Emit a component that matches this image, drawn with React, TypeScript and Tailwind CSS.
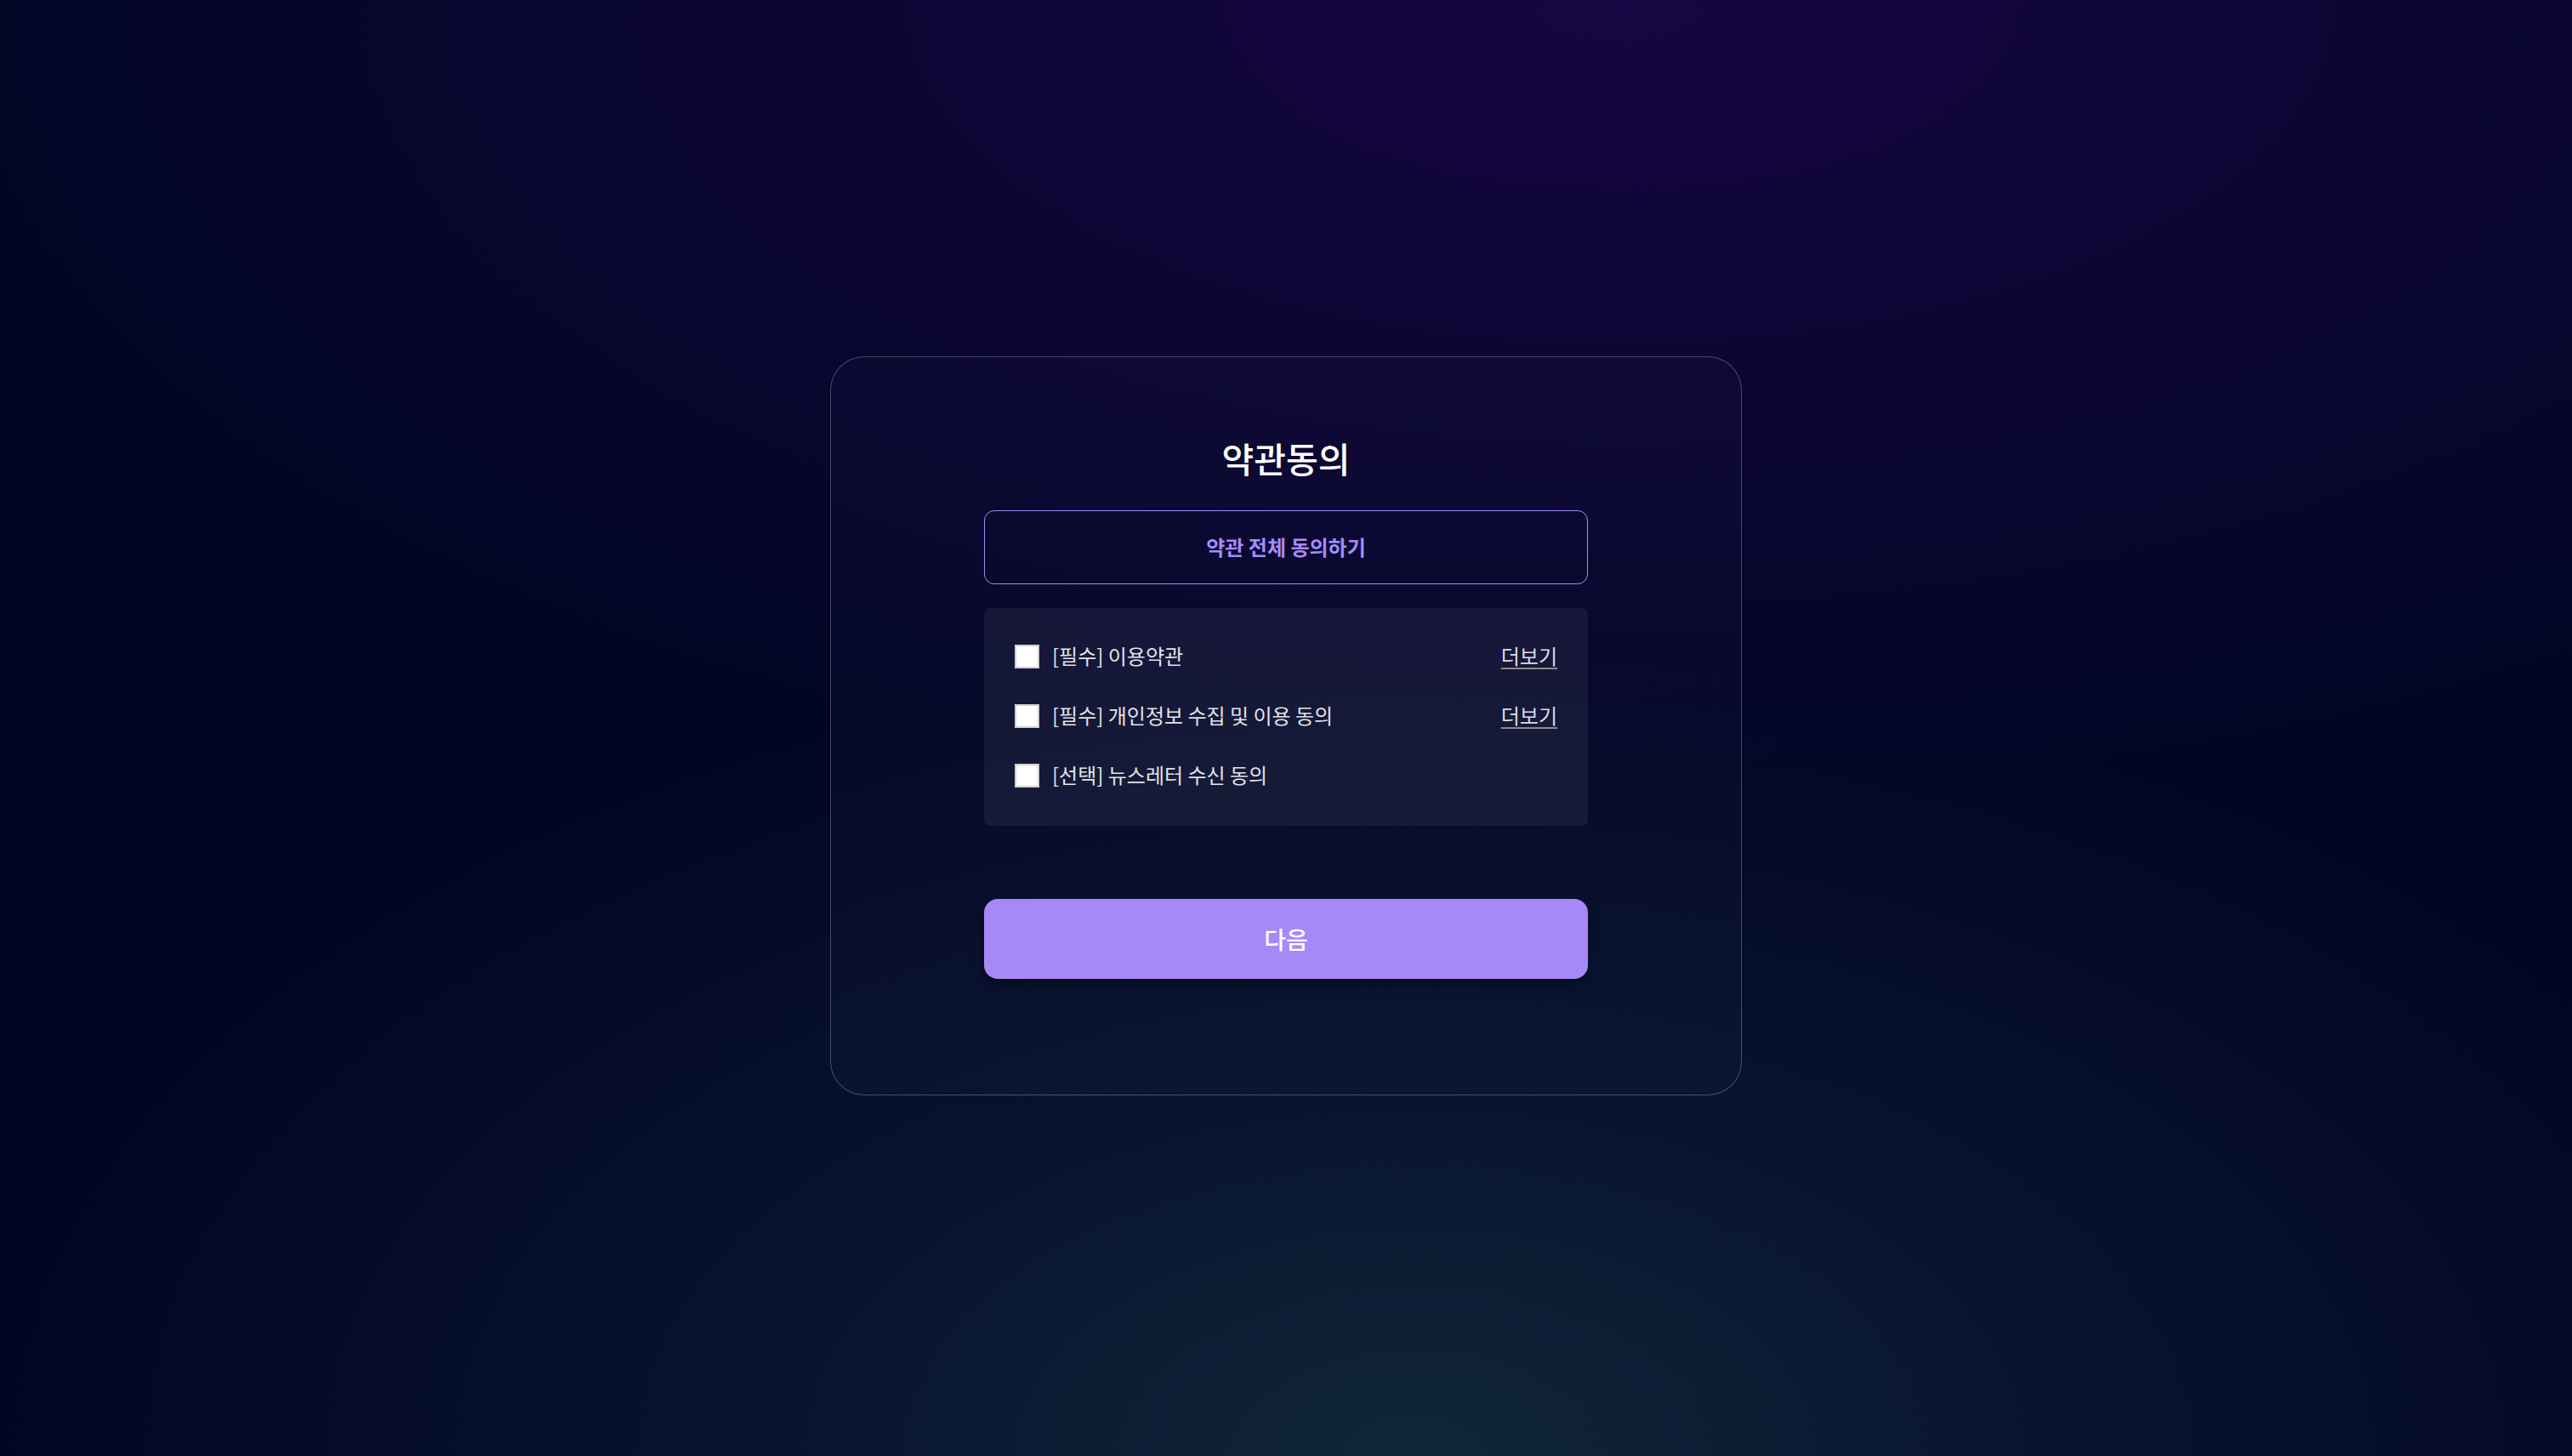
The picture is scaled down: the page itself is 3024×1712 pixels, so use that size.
import React, { useState } from 'react';

const terms = [
   { id: 'service', label: '[필수] 이용약관', more: true },
   { id: 'privacy', label: '[필수] 개인정보 수집 및 이용 동의', more: true },
   { id: 'newsletter', label: '[선택] 뉴스레터 수신 동의', more: false },
];

const App = () => {
   const [checked, setChecked] = useState<Record<string, boolean>>({});

   const toggle = (id: string) => setChecked((prev) => ({ ...prev, [id]: !prev[id] }));

   const agreeAll = () => {
      const next: Record<string, boolean> = {};
      terms.forEach((t) => (next[t.id] = true));
      setChecked(next);
   };

   return (
      <div
         className="min-h-screen w-full flex items-center justify-center bg-[#020626] bg-[radial-gradient(ellipse_65%_55%_at_63%_0%,#170643_0%,rgba(18,6,60,0.65)_45%,rgba(2,6,38,0)_100%),radial-gradient(ellipse_55%_55%_at_55%_100%,#10263a_0%,rgba(12,30,52,0.6)_45%,rgba(2,6,38,0)_100%)]"
         style={{ fontFamily: '"Noto Sans CJK KR", "Noto Sans", sans-serif' }}
      >
         <div className="w-[1072px] rounded-[40px] border border-white/25 bg-white/[0.015] px-[180px] pt-[86px] pb-[136px] mb-[6px]">
            <h1 className="text-center text-[41px] leading-[64px] font-medium text-white">약관동의</h1>

            <button
               type="button"
               onClick={agreeAll}
               className="mt-[30px] w-full h-[87px] rounded-[12px] border border-[#a78bfa] bg-transparent text-[24px] font-semibold text-[#a78bfa]"
            >
               약관 전체 동의하기
            </button>

            <div className="mt-[28px] rounded-[8px] bg-white/[0.06] px-[36px] pt-[38px] pb-[42px] flex flex-col gap-[34px]">
               {terms.map((t) => (
                  <div key={t.id} className="h-[36px] flex items-center justify-between">
                     <label className="flex items-center gap-[15px] cursor-pointer">
                        <span
                           onClick={() => toggle(t.id)}
                           className={`mt-[3px] w-[29px] h-[28px] border-2 border-[#cfcfcf] ${checked[t.id] ? 'bg-[#a78bfa]' : 'bg-white'}`}
                        />
                        <span className="text-[24px] leading-[36px] text-[#e2e2ea]">{t.label}</span>
                     </label>
                     {t.more && (
                        <a className="text-[24px] leading-[36px] text-[#dcdce4] underline decoration-[#8a8a8a] decoration-2 underline-offset-[4px] cursor-pointer">
                           더보기
                        </a>
                     )}
                  </div>
               ))}
            </div>

            <button
               type="button"
               className="mt-[86px] w-full h-[94px] rounded-[16px] bg-[#a788f8] text-[28px] font-medium text-white shadow-[0_6px_12px_rgba(0,0,0,0.35)]"
            >
               다음
            </button>
         </div>
      </div>
   );
};

export default App;
